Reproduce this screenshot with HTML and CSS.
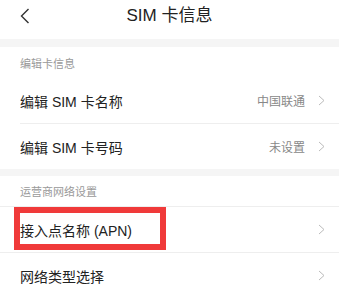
FILE: index.html
```html
<!DOCTYPE html>
<html lang="zh-CN">
<head>
    <meta charset="UTF-8">
    <meta name="viewport" content="width=device-width, initial-scale=1.0">
    <title>SIM 卡信息</title>
    <link rel="stylesheet" href="styles.css">
</head>
<body>
    <div class="header">
        <svg class="back" width="10" height="16" viewBox="0 0 10 16">
            <polyline points="8.5,1 1.5,8 8.5,15" fill="none" stroke="#333" stroke-width="1.4"/>
        </svg>
        <h1>SIM 卡信息</h1>
    </div>

    <div class="gap"></div>
    <div class="section-title">编辑卡信息</div>
    <div class="row">
        <span class="label">编辑 SIM 卡名称</span>
        <span class="value">中国联通
            <svg class="arrow" width="7" height="11" viewBox="0 0 7 11"><polyline points="1,1 6,5.5 1,10" fill="none" stroke="#bbb" stroke-width="1"/></svg>
        </span>
    </div>
    <div class="divider"></div>
    <div class="row">
        <span class="label">编辑 SIM 卡号码</span>
        <span class="value">未设置
            <svg class="arrow" width="7" height="11" viewBox="0 0 7 11"><polyline points="1,1 6,5.5 1,10" fill="none" stroke="#bbb" stroke-width="1"/></svg>
        </span>
    </div>

    <div class="gap thin"></div>
    <div class="section-title short">运营商网络设置</div>
    <div class="divider full"></div>
    <div class="row marked">
        <span class="label">接入点名称 (APN)</span>
        <span class="value">
            <svg class="arrow" width="7" height="11" viewBox="0 0 7 11"><polyline points="1,1 6,5.5 1,10" fill="none" stroke="#bbb" stroke-width="1"/></svg>
        </span>
        <div class="highlight"></div>
    </div>
    <div class="divider full"></div>
    <div class="row">
        <span class="label">网络类型选择</span>
        <span class="value">
            <svg class="arrow" width="7" height="11" viewBox="0 0 7 11"><polyline points="1,1 6,5.5 1,10" fill="none" stroke="#bbb" stroke-width="1"/></svg>
        </span>
    </div>
</body>
</html>
```

FILE: styles.css
```css
body {
    margin: 0;
    padding: 0;
    background-color: #fff;
    font-family: "Liberation Sans", "Noto Sans CJK SC", sans-serif;
    color: #222;
    overflow: hidden;
}
.header {
    height: 39px;
    position: relative;
    display: flex;
    justify-content: center;
    align-items: flex-start;
}
.header h1 {
    margin: 0;
    margin-top: 5px;
    font-size: 17px;
    font-weight: normal;
    line-height: 22px;
}
.back {
    position: absolute;
    left: 20px;
    top: 8px;
}
.gap {
    height: 8px;
    background-color: #f5f5f5;
}
.gap.thin {
    height: 7px;
}
.section-title {
    height: 31px;
    padding-left: 20px;
    font-size: 11px;
    color: #999;
    display: flex;
    align-items: center;
}
.section-title.short {
    height: 30px;
}
.row {
    height: 45px;
    padding: 0 14px 0 20px;
    display: flex;
    align-items: center;
    justify-content: space-between;
    font-size: 14px;
}
.value {
    display: flex;
    align-items: center;
    gap: 13px;
    font-size: 12px;
    color: #888;
}
.divider {
    height: 1px;
    background-color: #eee;
    margin-left: 20px;
}
.divider.full {
    margin-left: 0;
}
.marked {
    position: relative;
}
.highlight {
    position: absolute;
    left: 14px;
    top: 0;
    width: 140px;
    height: 31px;
    border: 6.5px solid #f03a3a;
}
```
